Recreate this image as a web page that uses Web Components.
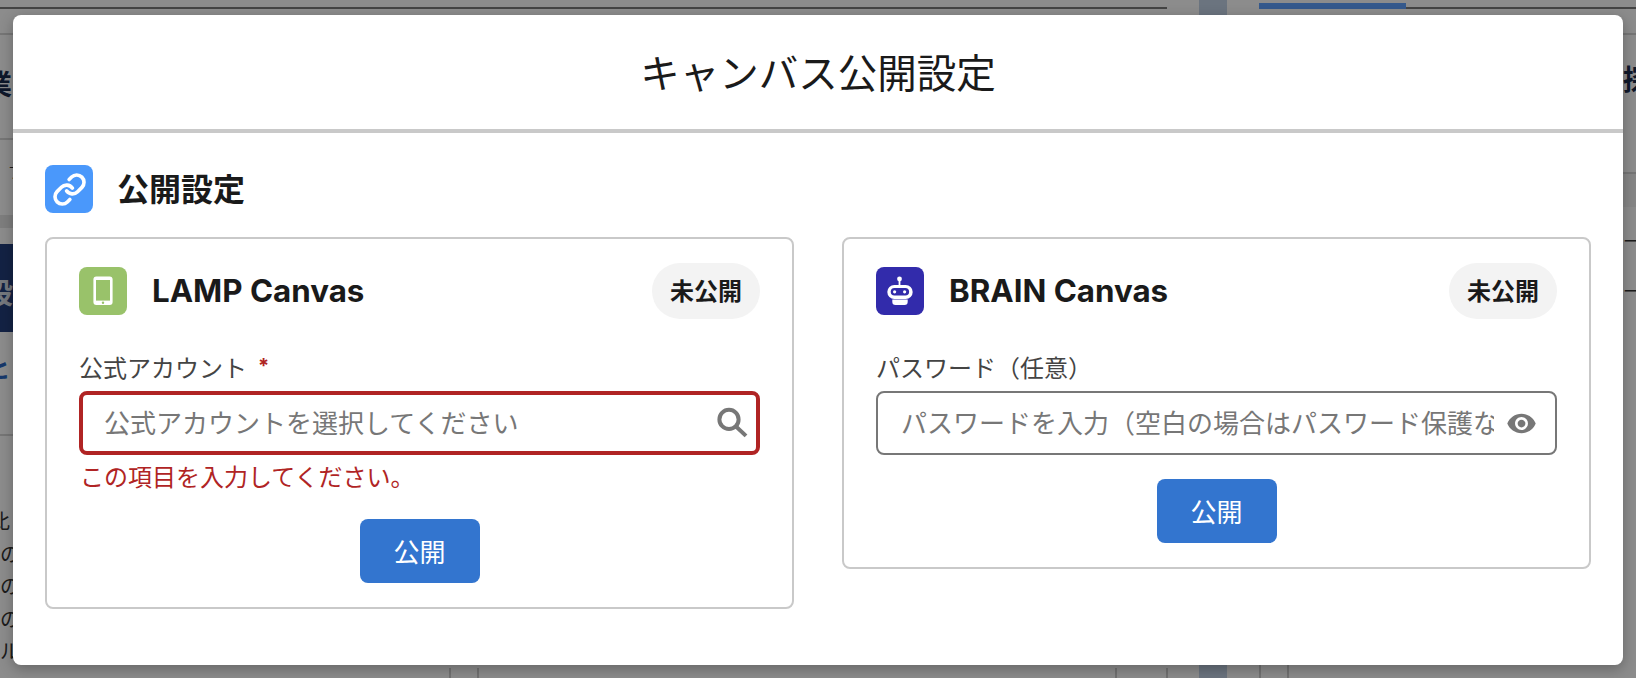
<!DOCTYPE html>
<html lang="ja">
<head>
<meta charset="utf-8">
<title>キャンバス公開設定</title>
<style>
html,body{margin:0;height:100%;overflow:hidden;background:#fff;font-family:Inter,"Noto Sans CJK JP",sans-serif;color:#1a1a1a}
app-shell{width:1636px;height:678px}
</style>
</head>
<body>
<template id="t-shell">
<style>
:host{display:block;position:relative;overflow:hidden}
.page{display:grid;grid-template-columns:1199px 28px 409px;height:678px;background:#fff}
.l,.r{display:flex;flex-direction:column;min-width:0;overflow:hidden}
.top{height:33px;border-bottom:2px solid #d8d8d8;box-sizing:content-box;flex:none}
.line{height:2px;margin-top:7px;background:#7c7c7c}
.l .line{width:1167px}
.head{height:105px;flex:none;border-bottom:2px solid #d8d8d8;font-weight:700;font-size:28px;line-height:36px;color:#1b2c4e;padding-top:32px;box-sizing:border-box;white-space:nowrap}
.l .head{text-indent:-16px}
.small{height:75px;flex:none;font-size:14px;line-height:20px;padding-top:22px;box-sizing:border-box;color:#333;text-indent:9px}
.band{height:13px;background:#e6e6e6;flex:none}
.gap{height:16px;flex:none}
.navy{height:88px;background:#243f7c;flex:none;color:#d8dde6;font-weight:700;font-size:28px;line-height:36px;padding-top:32px;box-sizing:border-box;text-indent:-15px}
.linkrow{height:104px;flex:none;border-bottom:2px solid #d8d8d8;color:#2a67c4;font-weight:700;font-size:24px;line-height:32px;padding-top:22px;box-sizing:border-box;text-indent:-14px}
.para{flex:1;font-size:20px;line-height:32.5px;padding-top:69px;color:#333;text-indent:-10px;white-space:nowrap;font-family:"Noto Sans CJK JP",sans-serif}
.cells{height:17px;flex:none;display:flex;font-size:18px;line-height:24px;color:#333;white-space:nowrap;overflow:hidden}
.cells span{border-left:2px solid #cfcfcf;box-sizing:border-box}
.bar{background:#c4d3e8}
.tab{display:flex;align-items:flex-start;height:33px;border-bottom:2px solid #d8d8d8;box-sizing:content-box;flex:none;padding-left:32px}
.tab i{display:block;width:147px;height:6px;margin-top:3px;background:#62a3ff;flex:none}
.tab b{display:block;flex:1;height:2px;margin-top:7px;background:#7c7c7c}
.rhead{height:139px;flex:none;border-bottom:2px solid #d8d8d8;font-weight:700;font-size:28px;line-height:36px;color:#1b2c4e;padding:27px 0 0 396px;box-sizing:border-box;white-space:nowrap}
.rband{height:33px;flex:none;background:#f4f4f4}
.rtxt{flex:1;padding-left:396px;font-size:18px;line-height:50px;color:#333;white-space:nowrap;padding-top:10px}
.rcells{height:13px;flex:none;display:flex}
.rcells span{border-left:2px solid #cfcfcf;box-sizing:border-box;width:28px}
.veil{position:absolute;inset:0;background:rgba(0,0,0,.45);padding:15px 13px 13px;box-sizing:border-box;display:flex;flex-direction:column}
</style>
<div class="page">
  <div class="l">
    <div class="top"><div class="line"></div></div>
    <div class="head">業</div>
    <div class="small">丁</div>
    <div class="band"></div>
    <div class="gap"></div>
    <div class="navy">設</div>
    <div class="linkrow">ヒ</div>
    <div class="para">比<br>の可<br>の<br>の内<br>ルJ</div>
    <div class="cells">
      <span style="width:449px;border-left:0"></span>
      <span style="width:28px"></span>
      <span style="width:638px;padding-left:61px">一一一一一　一一一一一一一一一</span>
      <span style="width:51px"></span>
      <span style="width:33px"></span>
    </div>
  </div>
  <div class="bar"></div>
  <div class="r">
    <div class="tab"><i></i><b></b></div>
    <div class="rhead">探</div>
    <div class="rband"></div>
    <div class="rtxt">ー<br>ー</div>
    <div class="rcells"><span style="margin-left:32px"></span><span></span></div>
  </div>
</div>
<div class="veil"><slot></slot></div>
</template>

<template id="t-dialog">
<style>
:host{display:flex;flex-direction:column;flex:1;background:#fff;border-radius:8px;box-shadow:0 4px 14px rgba(0,0,0,.28);overflow:hidden;min-height:0}
header{height:110px;border-bottom:4px solid #c9c9c9;display:flex;align-items:center;justify-content:center;flex:none;font-size:39.5px;font-weight:400;color:#1a1a1a;font-family:"Noto Sans CJK JP",sans-serif;padding-bottom:4px;box-sizing:content-box}
.body{padding:32px 32px 0;display:flex;flex-direction:column}
.sec{display:flex;align-items:center;gap:24px;height:48px;margin-bottom:24px;font-size:32px;font-weight:700;font-family:"Noto Sans CJK JP",sans-serif}
.sec ::slotted(span){position:relative;top:-2px}
.cards{display:grid;grid-template-columns:minmax(0,1fr) minmax(0,1fr);gap:48px;align-items:start}
</style>
<header><slot name="title"></slot></header>
<div class="body">
  <div class="sec"><slot name="icon"></slot><slot name="section"></slot></div>
  <div class="cards"><slot></slot></div>
</div>
</template>

<template id="t-tile">
<style>
:host{display:flex;width:48px;height:48px;border-radius:8px;flex:none;align-items:center;justify-content:center;background:var(--tile,#888);color:#fff}
::slotted(svg){display:block}
</style>
<slot></slot>
</template>

<template id="t-card">
<style>
:host{display:block;border:2px solid #c9c9c9;border-radius:8px;padding:24px 32px;background:#fff;min-width:0}
.top{display:flex;align-items:center;height:56px;gap:25px}
.name{flex:1;font-size:31.3px;font-weight:700;color:#1a1a1a;font-family:Inter,"Noto Sans CJK JP",sans-serif}
.pill{height:56px;width:108px;box-sizing:border-box;padding-bottom:3px;border-radius:28px;background:#f3f3f3;display:flex;align-items:center;justify-content:center;font-size:24px;font-weight:700;color:#1a1a1a;font-family:"Noto Sans CJK JP",sans-serif}
.act{display:flex;justify-content:center;margin-top:24px}
</style>
<div class="top"><slot name="icon"></slot><div class="name"><slot name="name"></slot></div><div class="pill"><slot name="status"></slot></div></div>
<slot></slot>
<div class="act"><slot name="action"></slot></div>
</template>

<template id="t-field">
<style>
:host{display:block;font-family:"Noto Sans CJK JP",sans-serif;min-width:0}
.label{height:34px;line-height:32px;margin-top:32px;margin-bottom:6px;font-size:24px;color:#444;white-space:nowrap;display:flex;align-items:flex-start}
.req{color:#b02424;font-weight:700;font-family:Inter,sans-serif;font-size:20px;margin-left:11px;line-height:30px}
.box{height:64px;box-sizing:border-box;border:2px solid #777;border-radius:8px;display:flex;align-items:center;padding-left:23px;padding-right:18px;gap:12px;background:#fff}
:host([invalid]) .box{border:4px solid #b02424;padding-left:21px;padding-right:3px;gap:0}
.ph{flex:1;min-width:0;overflow:hidden;white-space:nowrap;font-size:26px;line-height:36px;color:#777;padding-bottom:2px}
::slotted(svg){display:block;flex:none}
.err{display:none;height:34px;line-height:30px;margin-top:6px;font-size:24px;color:#b02424;padding-left:1px}
:host([invalid]) .err{display:block}
:host(:not([required])) .req{display:none}
</style>
<div class="label"><slot name="label"></slot><span class="req">*</span></div>
<div class="box"><div class="ph"><slot name="placeholder"></slot></div><slot name="icon"></slot></div>
<div class="err"><slot name="error"></slot></div>
</template>

<template id="t-btn">
<style>
:host{display:flex;width:120px;height:64px;box-sizing:border-box;padding-bottom:2px;border-radius:8px;background:#3375cf;color:#fff;align-items:center;justify-content:center;font-size:26px;font-family:"Noto Sans CJK JP",sans-serif}
</style>
<slot></slot>
</template>

<app-shell>
  <publish-dialog>
    <span slot="title">キャンバス公開設定</span>
    <icon-tile slot="icon" style="--tile:#4a98fb">
      <svg width="35" height="35" viewBox="0 0 24 24" fill="none" stroke="#fff" stroke-width="2.5" stroke-linecap="round" stroke-linejoin="round"><path d="M10 13a5 5 0 0 0 7.54.54l3-3a5 5 0 0 0-7.07-7.07l-1.72 1.71"/><path d="M14 11a5 5 0 0 0-7.54-.54l-3 3a5 5 0 0 0 7.07 7.07l1.71-1.71"/></svg>
    </icon-tile>
    <span slot="section">公開設定</span>

    <canvas-card>
      <icon-tile slot="icon" style="--tile:#99c26a">
        <svg width="48" height="48" viewBox="0 0 48 48"><rect x="14.4" y="9.6" width="19.2" height="28.4" rx="3" fill="#fff"/><rect x="17" y="13" width="14" height="20.6" fill="#99c26a"/><circle cx="24" cy="35.8" r="1.2" fill="#99c26a"/></svg>
      </icon-tile>
      <span slot="name">LAMP Canvas</span>
      <span slot="status">未公開</span>
      <text-field required invalid>
        <span slot="label">公式アカウント</span>
        <span slot="placeholder">公式アカウントを選択してください</span>
        <svg slot="icon" width="41" height="41" viewBox="0 0 41 41" fill="none" stroke="#777" stroke-width="4"><circle cx="17" cy="16.4" r="9.6"/><path d="M24 23.5l10 9.4"/></svg>
        <span slot="error">この項目を入力してください。</span>
      </text-field>
      <primary-button slot="action">公開</primary-button>
    </canvas-card>

    <canvas-card>
      <icon-tile slot="icon" style="--tile:#322bab">
        <svg width="48" height="48" viewBox="0 0 48 48"><circle cx="23.5" cy="12" r="2.4" fill="#fff"/><rect x="22.6" y="13" width="1.8" height="6" fill="#fff"/><rect x="11.3" y="18" width="25.4" height="14" rx="7" fill="#fff"/><rect x="14.7" y="21" width="18.4" height="7.6" rx="3.8" fill="#322bab"/><circle cx="18.6" cy="24.8" r="1.6" fill="#fff"/><circle cx="28.6" cy="24.8" r="1.6" fill="#fff"/><path d="M16.3 32.6h15.4v2.2a3.2 3.2 0 0 1-3.2 3.2h-9a3.2 3.2 0 0 1-3.2-3.2z" fill="#fff"/></svg>
      </icon-tile>
      <span slot="name">BRAIN Canvas</span>
      <span slot="status">未公開</span>
      <text-field>
        <span slot="label">パスワード（任意）</span>
        <span slot="placeholder">パスワードを入力（空白の場合はパスワード保護なし）</span>
        <svg slot="icon" width="31" height="31" viewBox="0 0 24 24" fill="#777"><path d="M12 4.5C7 4.5 2.73 7.61 1 12c1.73 4.39 6 7.5 11 7.5s9.27-3.11 11-7.5c-1.73-4.39-6-7.5-11-7.5zM12 17c-2.76 0-5-2.24-5-5s2.24-5 5-5 5 2.24 5 5-2.24 5-5 5zm0-8c-1.66 0-3 1.34-3 3s1.34 3 3 3 3-1.34 3-3-1.34-3-3-3z"/></svg>
      </text-field>
      <primary-button slot="action">公開</primary-button>
    </canvas-card>
  </publish-dialog>
</app-shell>

<script>
const reg=(name,id)=>customElements.define(name,class extends HTMLElement{
  constructor(){super();this.attachShadow({mode:'open'}).appendChild(document.getElementById(id).content.cloneNode(true));}
});
reg('app-shell','t-shell');
reg('publish-dialog','t-dialog');
reg('icon-tile','t-tile');
reg('canvas-card','t-card');
reg('text-field','t-field');
reg('primary-button','t-btn');
</script>
</body>
</html>
